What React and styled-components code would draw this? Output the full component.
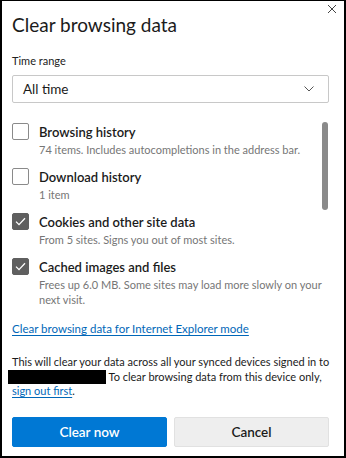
import React, { useState } from 'react';
import styled, { createGlobalStyle } from 'styled-components';

const GlobalStyle = createGlobalStyle`
  html, body {
    margin: 0;
    padding: 0;
    background: #ffffff;
  }
  body {
    font-family: Lato, "Liberation Sans", sans-serif;
    color: #1b1b1b;
  }
`;

const Dialog = styled.div`
  position: relative;
  box-sizing: border-box;
  width: 346px;
  height: 458px;
  border: 2px solid #000;
  border-top-width: 1px;
  background: #fff;
  padding: 0 15px 0 10px;
  display: flex;
  flex-direction: column;
`;

const CloseButton = styled.button`
  position: absolute;
  top: 2px;
  right: 6px;
  width: 12px;
  height: 12px;
  padding: 0;
  border: none;
  background: transparent;
  cursor: pointer;
  display: flex;
  align-items: center;
  justify-content: center;
`;

const Title = styled.h1`
  margin: 12px 0 0;
  font-size: 19px;
  font-weight: 400;
  line-height: 24px;
  color: #1b1b1b;
`;

const Label = styled.div`
  margin-top: 16px;
  font-size: 11px;
  line-height: 16px;
  color: #222;
`;

const Select = styled.div`
  margin-top: 6px;
  box-sizing: border-box;
  height: 28px;
  border: 1px solid #c8c8c8;
  border-radius: 2px;
  display: flex;
  align-items: center;
  justify-content: space-between;
  padding: 0 14px 0 10px;
  font-size: 13.5px;
  color: #1b1b1b;
  cursor: pointer;
`;

const ListArea = styled.div`
  margin-top: 19px;
  display: flex;
  align-items: flex-start;
`;

const List = styled.div`
  flex: 1;
  min-width: 0;
  display: flex;
  flex-direction: column;
  gap: 10px;
`;

const ScrollThumb = styled.div`
  flex: none;
  width: 6px;
  margin: 0 1px 0 12px;
  height: 88px;
  border-radius: 3px;
  background: #8a8a8a;
`;

const Item = styled.label`
  display: flex;
  align-items: flex-start;
  gap: 10px;
  cursor: pointer;
`;

const Box = styled.span`
  box-sizing: border-box;
  flex: none;
  width: 17px;
  height: 17px;
  margin-top: 1px;
  border-radius: 2px;
  border: 1px solid ${(p) => (p.checked ? '#5f5f5f' : '#8a8a8a')};
  background: ${(p) => (p.checked ? '#5f5f5f' : '#fff')};
  display: flex;
  align-items: center;
  justify-content: center;
`;

const ItemText = styled.div`
  display: flex;
  flex-direction: column;
`;

const ItemTitle = styled.div`
  font-size: 13px;
  font-weight: 600;
  line-height: 20px;
  color: #1b1b1b;
`;

const ItemSub = styled.div`
  font-size: 11px;
  line-height: 15px;
  color: #767676;
  white-space: nowrap;
`;

const Link = styled.a`
  color: #0067b8;
  text-decoration: underline;
  text-underline-offset: 2px;
  cursor: pointer;
`;

const IeLink = styled(Link)`
  margin-top: 14px;
  font-size: 11.5px;
  line-height: 16px;
  align-self: flex-start;
`;

const Notice = styled.p`
  margin: 18px 0 0;
  font-size: 11px;
  line-height: 14.5px;
  color: #1b1b1b;
  white-space: nowrap;
`;

const Redacted = styled.span`
  display: inline-block;
  width: 98px;
  height: 14px;
  margin-left: -4px;
  background: #000;
  vertical-align: -3px;
`;

const Buttons = styled.div`
  margin-top: auto;
  margin-bottom: 9px;
  display: grid;
  grid-template-columns: 1fr 1fr;
  gap: 7px;
`;

const Button = styled.button`
  box-sizing: border-box;
  height: 30px;
  border-radius: 2px;
  font-family: inherit;
  font-size: 13.5px;
  font-weight: 600;
  cursor: pointer;
  border: 1px solid ${(p) => (p.primary ? '#0078d4' : '#e1e1e1')};
  background: ${(p) => (p.primary ? '#0078d4' : '#eeeeee')};
  color: ${(p) => (p.primary ? '#ffffff' : '#1b1b1b')};
`;

const Check = () => (
  <svg width="11" height="9" viewBox="0 0 11 9" fill="none">
    <path d="M1 4.6 L4 7.6 L10 1.2" stroke="#fff" strokeWidth="1.3" />
  </svg>
);

const items = [
  { title: 'Browsing history', sub: ['74 items. Includes autocompletions in the address bar.'], checked: false },
  { title: 'Download history', sub: ['1 item'], checked: false },
  { title: 'Cookies and other site data', sub: ['From 5 sites. Signs you out of most sites.'], checked: true },
  {
    title: 'Cached images and files',
    sub: ['Frees up 6.0 MB. Some sites may load more slowly on your', 'next visit.'],
    checked: true,
  },
];

function App() {
  const [checked, setChecked] = useState(items.map((i) => i.checked));

  const toggle = (idx) => {
    setChecked(checked.map((c, i) => (i === idx ? !c : c)));
  };

  return (
    <>
      <GlobalStyle />
      <Dialog>
        <CloseButton aria-label="Close">
          <svg width="10" height="10" viewBox="0 0 10 10">
            <path d="M1 1 L9 9 M9 1 L1 9" stroke="#444" strokeWidth="1" />
          </svg>
        </CloseButton>
        <Title>Clear browsing data</Title>
        <Label>Time range</Label>
        <Select>
          <span>All time</span>
          <svg width="10" height="6" viewBox="0 0 10 6" fill="none">
            <path d="M0.5 0.5 L5 5 L9.5 0.5" stroke="#555" strokeWidth="1" />
          </svg>
        </Select>
        <ListArea>
          <List>
            {items.map((item, idx) => (
              <Item key={item.title} onClick={() => toggle(idx)}>
                <Box checked={checked[idx]}>{checked[idx] && <Check />}</Box>
                <ItemText>
                  <ItemTitle>{item.title}</ItemTitle>
                  {item.sub.map((line) => (
                    <ItemSub key={line}>{line}</ItemSub>
                  ))}
                </ItemText>
              </Item>
            ))}
          </List>
          <ScrollThumb />
        </ListArea>
        <IeLink>Clear browsing data for Internet Explorer mode</IeLink>
        <Notice>
          This will clear your data across all your synced devices signed in to
          <br />
          <Redacted /> To clear browsing data from this device only,
          <br />
          <Link>sign out first</Link>.
        </Notice>
        <Buttons>
          <Button primary>Clear now</Button>
          <Button>Cancel</Button>
        </Buttons>
      </Dialog>
    </>
  );
}

export default App;
